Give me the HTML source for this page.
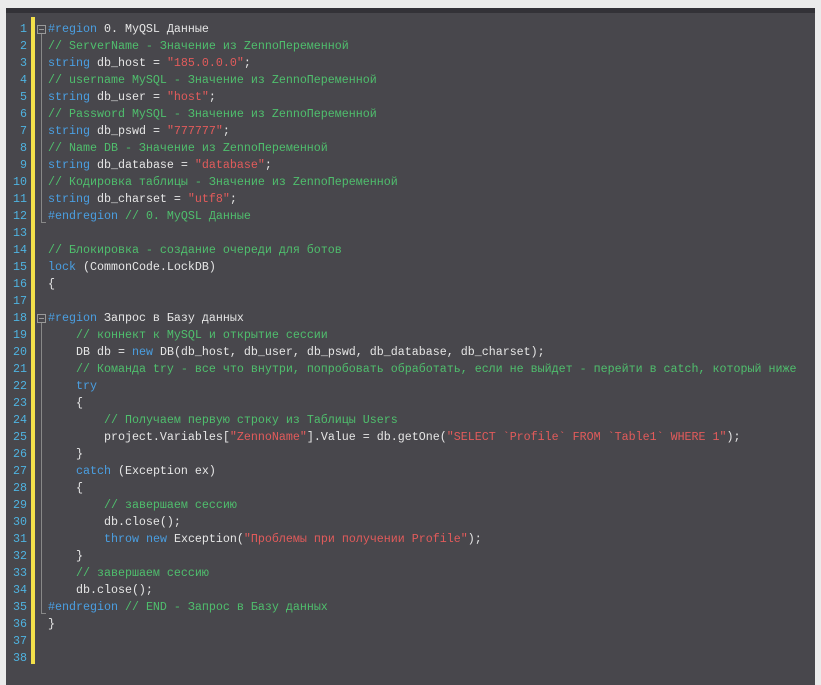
<!DOCTYPE html>
<html><head><meta charset="utf-8"><style>
body{margin:0;width:821px;height:685px;background:#ebebeb;overflow:hidden;position:relative}
#p{position:absolute;left:6px;top:8px;width:809px;height:677px;background:#48474c;border-top:5px solid #333237;box-sizing:border-box}
.bar{position:absolute;left:31px;top:17px;width:4px;height:647px;background:#f3e04a}
pre{margin:0;position:absolute;top:21px;font-family:"Liberation Mono","DejaVu Sans Mono",monospace;font-size:11.67px;line-height:17px;color:#e6e6e6}
#n{left:0;width:27px;text-align:right;color:#4fb3e0}
#c{left:48px}
.k{color:#4a9fe2}.g{color:#4fbf6d}.s{color:#e25b5b}
.fold{position:absolute;width:7px;height:7px;border:1px solid #999;left:37px}
.fold:after{content:"";position:absolute;left:1px;right:1px;top:3px;height:1px;background:#999}
.vl{position:absolute;left:41px;width:1px;background:#888}
.hl{position:absolute;left:41px;width:5px;height:1px;background:#888}
</style></head><body>
<div id="p"></div>
<div class="bar"></div>
<div class="fold" style="top:25px"></div>
<div class="vl" style="top:34px;height:188px"></div><div class="hl" style="top:222px"></div>
<div class="fold" style="top:314px"></div>
<div class="vl" style="top:323px;height:290px"></div><div class="hl" style="top:613px"></div>
<pre id="n">1
2
3
4
5
6
7
8
9
10
11
12
13
14
15
16
17
18
19
20
21
22
23
24
25
26
27
28
29
30
31
32
33
34
35
36
37
38</pre>
<pre id="c"><span class="k">#region</span> 0. MyQSL Данные
<span class="g">// ServerName - Значение из ZennoПеременной</span>
<span class="k">string</span> db_host = <span class="s">"185.0.0.0"</span>;
<span class="g">// username MySQL - Значение из ZennoПеременной</span>
<span class="k">string</span> db_user = <span class="s">"host"</span>;
<span class="g">// Password MySQL - Значение из ZennoПеременной</span>
<span class="k">string</span> db_pswd = <span class="s">"777777"</span>;
<span class="g">// Name DB - Значение из ZennoПеременной</span>
<span class="k">string</span> db_database = <span class="s">"database"</span>;
<span class="g">// Кодировка таблицы - Значение из ZennoПеременной</span>
<span class="k">string</span> db_charset = <span class="s">"utf8"</span>;
<span class="k">#endregion</span> <span class="g">// 0. MyQSL Данные</span>

<span class="g">// Блокировка - создание очереди для ботов</span>
<span class="k">lock</span> (CommonCode.LockDB)
{

<span class="k">#region</span> Запрос в Базу данных
    <span class="g">// коннект к MySQL и открытие сессии</span>
    DB db = <span class="k">new</span> DB(db_host, db_user, db_pswd, db_database, db_charset);
    <span class="g">// Команда try - все что внутри, попробовать обработать, если не выйдет - перейти в catch, который ниже</span>
    <span class="k">try</span>
    {
        <span class="g">// Получаем первую строку из Таблицы Users</span>
        project.Variables[<span class="s">"ZennoName"</span>].Value = db.getOne(<span class="s">"SELECT `Profile` FROM `Table1` WHERE 1"</span>);
    }
    <span class="k">catch</span> (Exception ex)
    {
        <span class="g">// завершаем сессию</span>
        db.close();
        <span class="k">throw</span> <span class="k">new</span> Exception(<span class="s">"Проблемы при получении Profile"</span>);
    }
    <span class="g">// завершаем сессию</span>
    db.close();
<span class="k">#endregion</span> <span class="g">// END - Запрос в Базу данных</span>
}
</pre>
</body></html>
